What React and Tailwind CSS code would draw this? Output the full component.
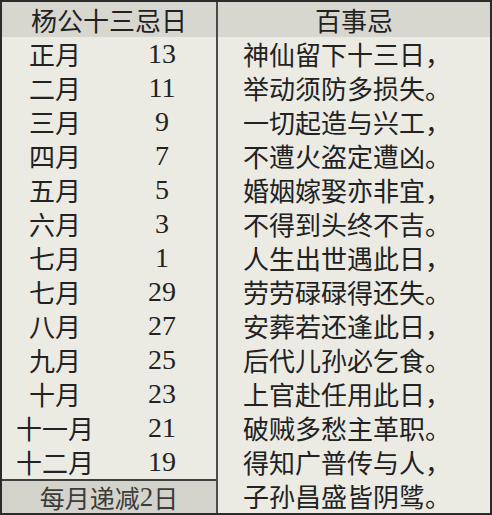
const months = [
  ['正月', '13'],
  ['二月', '11'],
  ['三月', '9'],
  ['四月', '7'],
  ['五月', '5'],
  ['六月', '3'],
  ['七月', '1'],
  ['七月', '29'],
  ['八月', '27'],
  ['九月', '25'],
  ['十月', '23'],
  ['十一月', '21'],
  ['十二月', '19'],
]

const lines = [
  '神仙留下十三日，',
  '举动须防多损失。',
  '一切起造与兴工，',
  '不遭火盗定遭凶。',
  '婚姻嫁娶亦非宜，',
  '不得到头终不吉。',
  '人生出世遇此日，',
  '劳劳碌碌得还失。',
  '安葬若还逢此日，',
  '后代儿孙必乞食。',
  '上官赴任用此日，',
  '破贼多愁主革职。',
  '得知广普传与人，',
  '子孙昌盛皆阴骘。',
]

const cjk = { fontFamily: '"Noto Sans CJK SC", "Noto Sans", sans-serif' }
const serif = { fontFamily: '"Liberation Serif", "Noto Sans CJK SC", serif' }

export default function App() {
  return (
    <div className="w-[492px] h-[515px] bg-[#2b2b2b] p-[2px] text-[#222]" style={cjk}>
      <div className="flex h-full w-full bg-[#ebebe4]">
        {/* left: 杨公十三忌日 */}
        <div className="flex w-[214px] flex-col">
          <div className="flex h-[35px] items-center justify-center bg-[#d8d7cf] text-[26px] leading-none">
            杨公十三忌日
          </div>
          {months.map(([m, d], i) => (
            <div key={i} className="flex h-[34px] items-center text-[26px] leading-none">
              <div className="w-[106px] text-center">{m}</div>
              <div className="flex-1 text-center text-[28px]" style={serif}>{d}</div>
            </div>
          ))}
          <div className="flex flex-1 items-center justify-center border-t-2 border-[#3f3f3f] bg-[#d3d3cb] text-[25px] leading-none text-[#3c3c3c]">
            每月递减<span style={serif} className="text-[27px]">2</span>日
          </div>
        </div>

        <div className="w-[2px] bg-[#4a4a4a]" />

        {/* right: 百事忌 */}
        <div className="flex flex-1 flex-col">
          <div className="flex h-[35px] items-center justify-center bg-[#d8d7cf] text-[26px] leading-none">
            百事忌
          </div>
          {lines.map((t, i) => (
            <div key={i} className="flex h-[34px] items-center pl-[25px] text-[26px] leading-none">
              {t}
            </div>
          ))}
        </div>
      </div>
    </div>
  )
}
